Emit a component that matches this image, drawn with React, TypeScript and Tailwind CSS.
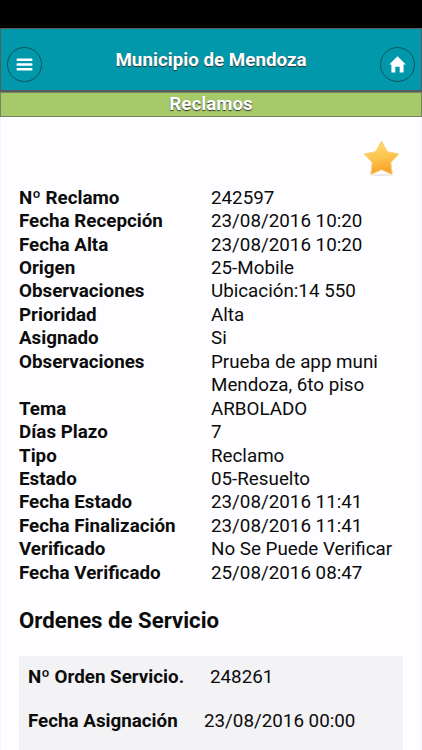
import React from "react";

interface Field {
  label: string;
  value: string;
}

const claimFields: Field[] = [
  { label: "Nº Reclamo", value: "242597" },
  { label: "Fecha Recepción", value: "23/08/2016 10:20" },
  { label: "Fecha Alta", value: "23/08/2016 10:20" },
  { label: "Origen", value: "25-Mobile" },
  { label: "Observaciones", value: "Ubicación:14 550" },
  { label: "Prioridad", value: "Alta" },
  { label: "Asignado", value: "Si" },
  { label: "Observaciones", value: "Prueba de app muni Mendoza, 6to piso" },
  { label: "Tema", value: "ARBOLADO" },
  { label: "Días Plazo", value: "7" },
  { label: "Tipo", value: "Reclamo" },
  { label: "Estado", value: "05-Resuelto" },
  { label: "Fecha Estado", value: "23/08/2016 11:41" },
  { label: "Fecha Finalización", value: "23/08/2016 11:41" },
  { label: "Verificado", value: "No Se Puede Verificar" },
  { label: "Fecha Verificado", value: "25/08/2016 08:47" },
];

function RoundButton({ label, children }: { label: string; children: React.ReactNode }) {
  return (
    <button
      aria-label={label}
      className="flex size-[35px] shrink-0 items-center justify-center rounded-full border border-[#12525c]"
    >
      {children}
    </button>
  );
}

function MenuIcon() {
  return (
    <svg width="17" height="13" viewBox="0 0 17 13" fill="#fff">
      <rect x="0.5" y="0.5" width="16" height="2.5" rx="1" />
      <rect x="0.5" y="5.2" width="16" height="2.5" rx="1" />
      <rect x="0.5" y="9.9" width="16" height="2.5" rx="1" />
    </svg>
  );
}

function HomeIcon() {
  return (
    <svg width="17" height="17" viewBox="0 0 17 17" fill="#fff">
      <path d="M8.5 0.3 16.8 8.5H14.6V16.5H10.7V10.8H6.3V16.5H2.4V8.5H0.2Z" />
    </svg>
  );
}

function StarIcon() {
  return (
    <svg width="37" height="38" viewBox="0 0 38 38" preserveAspectRatio="none">
      <defs>
        <linearGradient id="star" x1="0.4" y1="0" x2="0.6" y2="1">
          <stop offset="0" stopColor="#fddc72" />
          <stop offset="0.5" stopColor="#fcc34c" />
          <stop offset="1" stopColor="#f79d24" />
        </linearGradient>
      </defs>
      <ellipse cx="19" cy="36" rx="11" ry="1" fill="#e9e6e8" />
      <path
        d="M19 2 24.8 12.6 36.8 15 28.6 23.6 30 35.6 19 30.8 8 35.6 9.4 23.6 1.2 15 13.2 12.6Z"
        fill="url(#star)"
        stroke="#fbd083"
        strokeWidth="1"
        strokeLinejoin="round"
      />
    </svg>
  );
}

export default function App() {
  return (
    <div className="flex h-[750px] w-[422px] flex-col overflow-hidden bg-[#fefdff] font-[Roboto,sans-serif] text-[18.8px] leading-[23.44px] text-[#0c0c0c]">
      <div className="h-7 shrink-0 bg-black" />
      <header className="flex h-16 shrink-0 items-center justify-between border-x border-t border-b-2 border-[#565b5c] bg-[#0098aa] px-1.5 pt-2.5">
        <RoundButton label="Menú">
          <MenuIcon />
        </RoundButton>
        <h1 className="mb-2 font-bold text-white [text-shadow:0_1px_1px_#333]">Municipio de Mendoza</h1>
        <RoundButton label="Inicio">
          <HomeIcon />
        </RoundButton>
      </header>
      <h2 className="h-[25px] shrink-0 border border-[#788067] bg-[#a6c969] text-center font-bold text-white [text-shadow:0_1px_1px_#333]">
        Reclamos
      </h2>

      <main className="flex flex-col border-x border-[#f5f4f6] px-[18px]">
        <div className="flex h-[69.7px] shrink-0 items-end justify-end pr-[3.5px] pb-[9.7px]">
          <StarIcon />
        </div>
        <dl>
          {claimFields.map(({ label, value }, i) => (
            <div key={i} className="flex">
              <dt className="w-48 shrink-0 font-bold">{label}</dt>
              <dd className="w-48">{value}</dd>
            </div>
          ))}
        </dl>

        <h3 className="mt-[21px] text-[22.2px] leading-7 font-bold">Ordenes de Servicio</h3>
        <dl className="mt-[22px] flex h-[110px] shrink-0 flex-col gap-5 bg-[#f3f2f5] px-[9px] pt-[10px]">
          <div className="flex">
            <dt className="w-[182px] shrink-0 font-bold">Nº Orden Servicio.</dt>
            <dd>248261</dd>
          </div>
          <div className="flex">
            <dt className="w-44 shrink-0 font-bold">Fecha Asignación</dt>
            <dd>23/08/2016 00:00</dd>
          </div>
        </dl>
      </main>
    </div>
  );
}
